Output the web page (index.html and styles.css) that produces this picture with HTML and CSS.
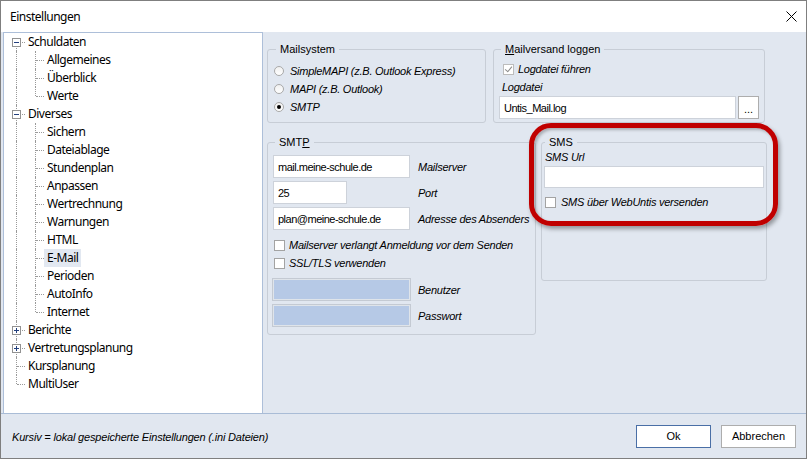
FILE: index.html
```html
<!DOCTYPE html>
<html lang="de">
<head>
    <meta charset="UTF-8">
    <title>Einstellungen</title>
    <link rel="stylesheet" href="styles.css">
</head>
<body>
<div class="window">
    <div class="titlebar">
        <span class="title">Einstellungen</span>
        <svg class="close" width="11" height="11" viewBox="0 0 11 11">
            <path d="M0.5 0.5 L10.5 10.5 M10.5 0.5 L0.5 10.5" stroke="#000" stroke-width="1" fill="none"/>
        </svg>
    </div>

    <div class="main">
        <div class="tree">
            <div class="node"><span class="cell v first h"><span class="box minus"></span></span><span class="label">Schuldaten</span></div>
            <div class="node"><span class="cell v"></span><span class="cell v h"></span><span class="label">Allgemeines</span></div>
            <div class="node"><span class="cell v"></span><span class="cell v h"></span><span class="label">Überblick</span></div>
            <div class="node"><span class="cell v"></span><span class="cell v end h"></span><span class="label">Werte</span></div>
            <div class="node"><span class="cell v h"><span class="box minus"></span></span><span class="label">Diverses</span></div>
            <div class="node"><span class="cell v"></span><span class="cell v h"></span><span class="label">Sichern</span></div>
            <div class="node"><span class="cell v"></span><span class="cell v h"></span><span class="label">Dateiablage</span></div>
            <div class="node"><span class="cell v"></span><span class="cell v h"></span><span class="label">Stundenplan</span></div>
            <div class="node"><span class="cell v"></span><span class="cell v h"></span><span class="label">Anpassen</span></div>
            <div class="node"><span class="cell v"></span><span class="cell v h"></span><span class="label">Wertrechnung</span></div>
            <div class="node"><span class="cell v"></span><span class="cell v h"></span><span class="label">Warnungen</span></div>
            <div class="node"><span class="cell v"></span><span class="cell v h"></span><span class="label">HTML</span></div>
            <div class="node"><span class="cell v"></span><span class="cell v h"></span><span class="label selected">E-Mail</span></div>
            <div class="node"><span class="cell v"></span><span class="cell v h"></span><span class="label">Perioden</span></div>
            <div class="node"><span class="cell v"></span><span class="cell v h"></span><span class="label">AutoInfo</span></div>
            <div class="node"><span class="cell v"></span><span class="cell v end h"></span><span class="label">Internet</span></div>
            <div class="node"><span class="cell v h"><span class="box plus"></span></span><span class="label">Berichte</span></div>
            <div class="node"><span class="cell v h"><span class="box plus"></span></span><span class="label">Vertretungsplanung</span></div>
            <div class="node"><span class="cell v h"></span><span class="label">Kursplanung</span></div>
            <div class="node"><span class="cell v end h"></span><span class="label">MultiUser</span></div>
        </div>

        <div class="content">
            <div class="row top-row">
                <fieldset class="group mailsystem">
                    <legend>Mailsystem</legend>
                    <div class="option"><span class="radio"></span><span class="it">SimpleMAPI (z.B. Outlook Express)</span></div>
                    <div class="option"><span class="radio"></span><span class="it">MAPI (z.B. Outlook)</span></div>
                    <div class="option"><span class="radio on"></span><span class="it">SMTP</span></div>
                </fieldset>

                <fieldset class="group logging">
                    <legend><u>M</u>ailversand loggen</legend>
                    <div class="option check-row"><span class="check checked disabled"></span><span class="it">Logdatei führen</span></div>
                    <div class="caption it">Logdatei</div>
                    <div class="file-row">
                        <input class="text file" value="Untis_Mail.log">
                        <button class="browse">...</button>
                    </div>
                </fieldset>
            </div>

            <div class="row bottom-row">
                <fieldset class="group smtp">
                    <legend>SMT<u>P</u></legend>
                    <div class="fields">
                        <input class="text wide" value="mail.meine-schule.de"><span class="it">Mailserver</span>
                        <input class="text short" value="25"><span class="it">Port</span>
                        <input class="text wide" value="plan@meine-schule.de"><span class="it">Adresse des Absenders</span>
                    </div>
                    <div class="checks">
                        <div class="option check-row"><span class="check"></span><span class="it">Mailserver verlangt Anmeldung vor dem Senden</span></div>
                        <div class="option check-row"><span class="check"></span><span class="it">SSL/TLS verwenden</span></div>
                    </div>
                    <div class="fields login">
                        <input class="text wide off" disabled><span class="it">Benutzer</span>
                        <input class="text wide off" disabled><span class="it">Passwort</span>
                    </div>
                </fieldset>

                <fieldset class="group sms">
                    <legend>SMS</legend>
                    <div class="caption it sms-caption">SMS Url</div>
                    <input class="text url" value="">
                    <div class="option check-row sms-check"><span class="check"></span><span class="it">SMS über WebUntis versenden</span></div>
                </fieldset>
            </div>

            <div class="marker"></div>
        </div>
    </div>

    <div class="footer">
        <span class="hint it">Kursiv = lokal gespeicherte Einstellungen (.ini Dateien)</span>
        <div class="buttons">
            <button class="btn default">Ok</button>
            <button class="btn">Abbrechen</button>
        </div>
    </div>
</div>
</body>
</html>
```

FILE: styles.css
```css
*{
    box-sizing: border-box;
}
body{
    margin: 0;
    font-family: "Liberation Sans", Arial, sans-serif;
    font-size: 11px;
    color: #000;
}
.window{
    width: 807px;
    height: 459px;
    border: 1px solid #7f7f7f;
    background-color: #e1e7f0;
    display: flex;
    flex-direction: column;
}
.titlebar{
    height: 31px;
    flex: none;
    background-color: #fff;
    display: flex;
    align-items: center;
    justify-content: space-between;
    padding: 0 9px;
    font-family: "Noto Sans", sans-serif;
    font-size: 12px;
    letter-spacing: -0.5px;
}
.close{
    display: block;
    margin-top: -1px;
}

.main{
    flex: 1;
    display: flex;
    min-height: 0;
}

/* tree */
.tree{
    width: 260px;
    margin-left: 2px;
    flex: none;
    background-color: #fff;
    border: 1px solid #adbfd9;
    border-bottom: none;
    font-family: "Noto Sans", sans-serif;
    font-size: 12px;
    letter-spacing: -0.5px;
}
.node{
    display: flex;
    height: 18px;
    padding-left: 5px;
}
.cell{
    position: relative;
    width: 19px;
    flex: none;
}
.cell.v::before{
    content: '';
    position: absolute;
    left: 7px;
    top: 0;
    bottom: 0;
    border-left: 1px dotted #9a9a9a;
}
.cell.first::before{
    top: 9px;
}
.cell.end::before{
    bottom: 9px;
}
.cell.h::after{
    content: '';
    position: absolute;
    left: 8px;
    right: 3px;
    top: 9px;
    border-top: 1px dotted #9a9a9a;
}
.box{
    position: absolute;
    left: 3px;
    top: 5px;
    width: 9px;
    height: 9px;
    border: 1px solid #929292;
    background-color: #fff;
    z-index: 1;
}
.box::before{
    content: '';
    position: absolute;
    left: 1px;
    right: 1px;
    top: 3px;
    height: 1px;
    background-color: #23407e;
}
.box.plus::after{
    content: '';
    position: absolute;
    left: 3px;
    top: 1px;
    bottom: 1px;
    width: 1px;
    background-color: #23407e;
}
.label{
    line-height: 18px;
    padding: 0 3px;
    margin-left: -3px;
    white-space: nowrap;
}
.label.selected{
    background-color: #e2e8f1;
}

/* right side */
.content{
    flex: 1;
    position: relative;
    padding: 10px 0 0 4px;
}
.row{
    display: flex;
    align-items: flex-start;
}
.top-row{
    gap: 7px;
}
.bottom-row{
    gap: 5px;
    margin-top: 12px;
}
.group{
    margin: 0;
    min-width: 0;
    border: 1px solid #c7cdd6;
    border-radius: 3px;
    padding: 0 5px;
}
.group legend{
    padding: 0 4px;
    margin-left: 2px;
    line-height: 14px;
    font-size: 11px;
}
.it{
    font-style: italic;
    white-space: nowrap;
    letter-spacing: -0.25px;
}
.option{
    display: flex;
    align-items: center;
    height: 18px;
}

.mailsystem{
    width: 219px;
    height: 81px;
    padding: 6px 5px 0 6px;
}
.radio{
    width: 10px;
    height: 10px;
    border-radius: 50%;
    border: 1px solid #a9a9a9;
    background: linear-gradient(#f0f0f0, #fff);
    margin-right: 6px;
    position: relative;
}
.radio.on::after{
    content: '';
    position: absolute;
    left: 2px;
    top: 2px;
    width: 4px;
    height: 4px;
    border-radius: 50%;
    background-color: #000;
}

.check{
    width: 11px;
    height: 11px;
    border: 1px solid #a3a3a3;
    background-color: #fff;
    margin-right: 4px;
    flex: none;
    position: relative;
}
.check.disabled{
    border-color: #bcbcbc;
}
.check.checked::after{
    content: '';
    position: absolute;
    left: 2px;
    top: 0px;
    width: 3px;
    height: 6px;
    border-right: 1px solid #8c8c8c;
    border-bottom: 1px solid #8c8c8c;
    transform: rotate(40deg);
    transform-origin: 60% 60%;
}

.logging{
    width: 272px;
    height: 81px;
    padding: 4px 5px 0 5px;
}
.logging .check-row{
    padding-left: 4px;
}
.caption{
    line-height: 18px;
    padding-left: 3px;
}

.text{
    display: block;
    height: 23px;
    margin: 0;
    padding: 0 4px;
    border: 1px solid #cdd2da;
    background-color: #fff;
    font-family: "Liberation Sans", Arial, sans-serif;
    font-size: 11px;
    letter-spacing: -0.5px;
    color: #000;
    outline: none;
}
.file-row{
    display: flex;
}
.file{
    width: 237px;
}
.browse{
    width: 21px;
    height: 23px;
    margin-left: 2px;
    padding: 0 0 3px;
    border: 1px solid #adadad;
    background-color: #fff;
    font-family: "Liberation Sans", Arial, sans-serif;
    font-size: 11px;
    line-height: 1;
    display: flex;
    align-items: flex-end;
    justify-content: center;
}

.smtp{
    width: 269px;
    height: 200px;
    padding: 6px 5px 0 5px;
}
.fields{
    display: grid;
    grid-template-columns: 145px auto;
    grid-auto-rows: 23px;
    row-gap: 3px;
    align-items: center;
}
.wide{
    width: 137px;
}
.short{
    width: 74px;
}
.checks{
    margin-top: 6px;
}
.checks .check-row{
    padding-left: 1px;
}
.fields.login{
    margin-top: 7px;
    grid-auto-rows: 21px;
    row-gap: 5px;
}
.text.off{
    height: 21px;
    background-color: #b6c9e6;
    border: 1px solid #dfe4ea;
    box-shadow: 0 0 0 1px #c4cad3;
}

.sms{
    width: 226px;
    height: 146px;
    padding: 0 2px;
}
.sms legend{
    margin-left: 1px;
}
.sms-caption{
    line-height: 17px;
    padding-left: 1px;
}
.url{
    width: 220px;
    height: 22px;
}
.sms-check{
    margin-top: 5px;
    padding-left: 1px;
}
.sms-check .check{
    margin-right: 5px;
}

/* red annotation round the SMS box */
.marker{
    position: absolute;
    left: 266px;
    top: 91px;
    width: 249px;
    height: 103px;
    border: 5px solid #c00000;
    border-radius: 22px;
    box-shadow: 2px 3px 4px rgba(0, 0, 0, 0.35), inset 2px 2px 3px rgba(0, 0, 0, 0.25);
    pointer-events: none;
}

/* footer */
.footer{
    height: 45px;
    flex: none;
    border-top: 1px solid #a9bcd6;
    display: flex;
    align-items: center;
    justify-content: space-between;
    padding: 0 10px 0 11px;
}
.hint{
    margin-top: 1px;
    letter-spacing: -0.18px;
}
.buttons{
    display: flex;
    gap: 10px;
}
.btn{
    width: 75px;
    height: 23px;
    padding: 0;
    background-color: #fff;
    border: 1px solid #adadad;
    font-family: "Liberation Sans", Arial, sans-serif;
    font-size: 11px;
    color: #000;
}
.btn.default{
    border-color: #4a6fa6;
}
```
